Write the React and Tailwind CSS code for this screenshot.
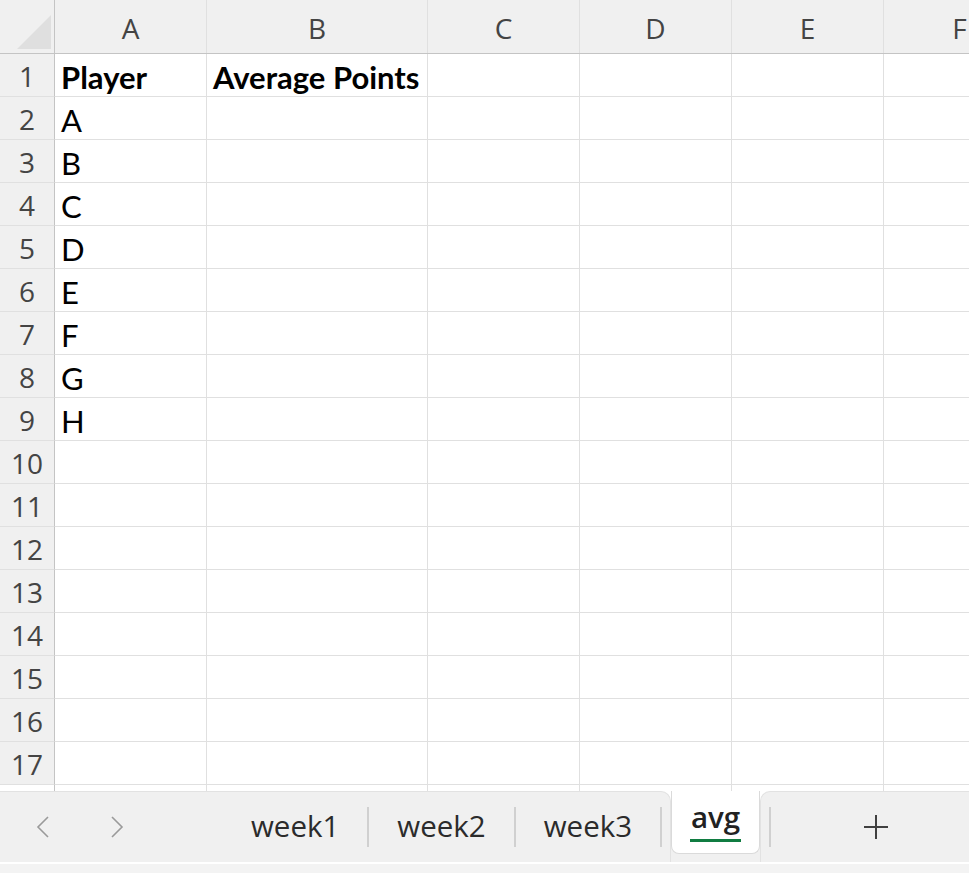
import React from 'react';

const columns = [
    { name: 'A', width: 'w-[152px]' },
    { name: 'B', width: 'w-[221px]' },
    { name: 'C', width: 'w-[152px]' },
    { name: 'D', width: 'w-[152px]' },
    { name: 'E', width: 'w-[152px]' },
    { name: 'F', width: 'w-[152px]' },
];

const data = [
    ['Player', 'Average Points'],
    ['A'], ['B'], ['C'], ['D'], ['E'], ['F'], ['G'], ['H'],
];

const rows = Array.from({ length: 17 }, (_, i) => i + 1);

const headFont = { fontFamily: '"Open Sans", "Noto Sans", sans-serif' };
const cellFont = { fontFamily: 'Lato, "Liberation Sans", sans-serif' };

const Chevron = ({ dir }) => (
    <svg width="16" height="24" viewBox="0 0 16 24" fill="none" stroke="#9a9a9a" strokeWidth="1.6">
        {dir === 'left'
            ? <polyline points="13,2 3,12 13,22" />
            : <polyline points="3,2 13,12 3,22" />}
    </svg>
);

const Sep = () => <div className="w-[2px] h-[40px] bg-[#d0d0d0]" />;

const SheetTab = ({ label }) => (
    <div className="px-[28px] text-[29.5px] text-[#2b2b2b] leading-none pb-[3px]" style={headFont}>{label}</div>
);

export default function App() {
    return (
        <div className="w-[969px] h-[873px] overflow-hidden flex flex-col bg-white">
            {/* Grid */}
            <div className="h-[791px] overflow-hidden flex flex-col">
                {/* column header */}
                <div className="flex h-[54px] shrink-0 bg-[#f0f0f0] border-b border-[#c4c4c4]">
                    <div className="w-[55px] shrink-0 border-r border-[#c4c4c4] relative">
                        <div className="absolute left-[17px] top-[15px] w-[34px] h-[34px] bg-[#dfdfdf] [clip-path:polygon(100%_0,100%_100%,0_100%)]" />
                    </div>
                    {columns.map((c) => (
                        <div
                            key={c.name}
                            className={`${c.width} shrink-0 border-r border-[#e0e0e0] flex items-center justify-center text-[28px] text-[#444] pt-[3px]`}
                            style={headFont}
                        >
                            {c.name}
                        </div>
                    ))}
                </div>

                {rows.map((r) => (
                    <div key={r} className="flex h-[43px] shrink-0">
                        <div
                            className="w-[55px] shrink-0 bg-[#f0f0f0] border-r border-[#c4c4c4] border-b border-b-[#e0e0e0] flex items-center justify-center text-[28px] text-[#444] pt-[2px]"
                            style={headFont}
                        >
                            {r}
                        </div>
                        {columns.map((c, ci) => {
                            const val = (data[r - 1] || [])[ci];
                            return (
                                <div
                                    key={c.name}
                                    className={`${c.width} shrink-0 border-r border-b border-[#e0e0e0] flex items-center px-[6px] pt-[4px] text-[31px] text-black whitespace-nowrap overflow-visible ${r === 1 ? 'font-bold' : ''}`}
                                    style={cellFont}
                                >
                                    {val}
                                </div>
                            );
                        })}
                    </div>
                ))}

                {/* partially visible next row */}
                <div className="flex h-[43px] shrink-0">
                    <div className="w-[55px] shrink-0 border-r border-[#c4c4c4]" />
                    {columns.map((c) => (
                        <div key={c.name} className={`${c.width} shrink-0 border-r border-[#e0e0e0]`} />
                    ))}
                </div>
            </div>

            {/* Sheet tabs bar */}
            <div className="h-[71px] shrink-0 flex bg-white">
                <div className="flex items-center bg-[#f0f0f0] rounded-tr-[10px] border-t border-r border-[#e2e2e2]">
                    <div className="w-[74px] flex justify-center pl-[12px]"><Chevron dir="left" /></div>
                    <div className="w-[74px] flex justify-center pl-[12px]"><Chevron dir="right" /></div>
                    <div className="w-[75px]" />
                    <SheetTab label="week1" />
                    <Sep />
                    <SheetTab label="week2" />
                    <Sep />
                    <SheetTab label="week3" />
                    <Sep />
                    <div className="w-[8px]" />
                </div>
                <div className="bg-[#f0f0f0] flex flex-col">
                    <div className="h-[63px] bg-white rounded-b-[8px] border-x border-b border-[#dadada] px-[18px] flex flex-col items-center justify-center" style={headFont}>
                        <span className="text-[29.5px] font-semibold text-[#222] leading-none pb-[6px]">avg</span>
                        <div className="w-[51px] h-[3px] bg-[#107c41] mt-[2px]" />
                    </div>
                </div>
                <div className="flex-1 flex items-center bg-[#f0f0f0] rounded-tl-[10px] border-t border-l border-[#e2e2e2]">
                    <div className="w-[8px]" />
                    <Sep />
                    <div className="ml-[92px] flex">
                        <svg width="26" height="26" viewBox="0 0 26 26" stroke="#404040" strokeWidth="2">
                            <line x1="13" y1="1" x2="13" y2="25" />
                            <line x1="1" y1="13" x2="25" y2="13" />
                        </svg>
                    </div>
                </div>
            </div>

            <div className="h-[2px] bg-white shrink-0" />
            <div className="flex-1 bg-[#f3f3f3]" />
        </div>
    );
}
